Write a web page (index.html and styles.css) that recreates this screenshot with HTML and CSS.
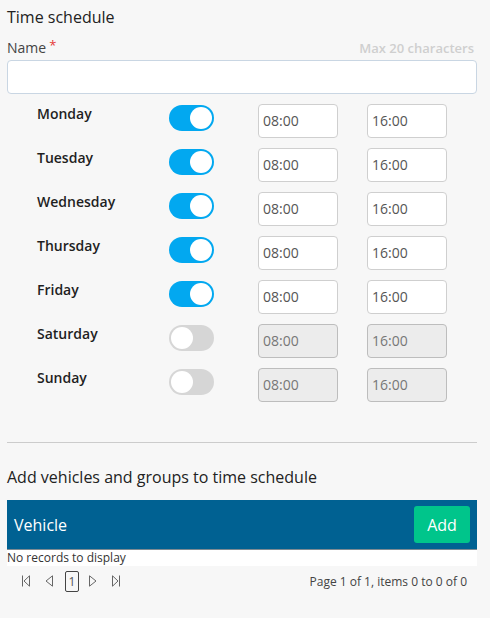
FILE: index.html
```html
<!DOCTYPE html>
<html>
<head>
<meta charset="utf-8">
<link rel="stylesheet" href="styles.css">
</head>
<body>
<div class="page">
  <h1 class="title">Time schedule</h1>
  <div class="name-row">
    <label class="name-label">Name<span class="req">*</span></label>
    <span class="hint">Max 20 characters</span>
  </div>
  <input class="name-input" type="text">

  <div class="days">
    <div class="day"><span class="day-name">Monday</span><span class="toggle on"><span class="knob"></span></span><span class="time">08:00</span><span class="time">16:00</span></div>
    <div class="day"><span class="day-name">Tuesday</span><span class="toggle on"><span class="knob"></span></span><span class="time">08:00</span><span class="time">16:00</span></div>
    <div class="day"><span class="day-name">Wednesday</span><span class="toggle on"><span class="knob"></span></span><span class="time">08:00</span><span class="time">16:00</span></div>
    <div class="day"><span class="day-name">Thursday</span><span class="toggle on"><span class="knob"></span></span><span class="time">08:00</span><span class="time">16:00</span></div>
    <div class="day"><span class="day-name">Friday</span><span class="toggle on"><span class="knob"></span></span><span class="time">08:00</span><span class="time">16:00</span></div>
    <div class="day"><span class="day-name">Saturday</span><span class="toggle"><span class="knob"></span></span><span class="time disabled">08:00</span><span class="time disabled">16:00</span></div>
    <div class="day"><span class="day-name">Sunday</span><span class="toggle"><span class="knob"></span></span><span class="time disabled">08:00</span><span class="time disabled">16:00</span></div>
  </div>

  <hr class="divider">

  <h2 class="subtitle">Add vehicles and groups to time schedule</h2>
  <div class="grid-header">
    <span class="col">Vehicle</span>
    <button class="add-btn">Add</button>
  </div>
  <div class="grid-empty">No records to display</div>
  <div class="pager">
    <div class="pager-nav">
      <svg class="pico first" viewBox="0 0 8 12" width="8" height="12"><path d="M0.5 0.5v11M7.5 0.8 2 6l5.5 5.2z" fill="none" stroke="#666" stroke-width="1"/></svg>
      <svg class="pico prev" viewBox="0 0 8 12" width="8" height="12"><path d="M7.5 0.8 1 6l6.5 5.2z" fill="none" stroke="#666" stroke-width="1"/></svg>
      <span class="page-num">1</span>
      <svg class="pico next" viewBox="0 0 8 12" width="8" height="12"><path d="M0.5 0.8 7 6l-6.5 5.2z" fill="none" stroke="#666" stroke-width="1"/></svg>
      <svg class="pico last" viewBox="0 0 8 12" width="8" height="12"><path d="M7.5 0.5v11M0.5 0.8 6 6l-5.5 5.2z" fill="none" stroke="#666" stroke-width="1"/></svg>
    </div>
    <span class="pager-info">Page 1 of 1, items 0 to 0 of 0</span>
  </div>
</div>
</body>
</html>
```

FILE: styles.css
```css
* { box-sizing: border-box; }
html, body {
  margin: 0;
  padding: 0;
  background: #f7f7f7;
  font-family: "Open Sans", "Noto Sans", sans-serif;
  color: #333;
}
.page {
  width: 490px;
  height: 618px;
  padding: 0 13px 0 7px;
}
.title {
  margin: 0;
  padding-top: 6px;
  font-size: 16px;
  font-weight: 400;
  line-height: 22px;
  color: #222;
}
.name-row {
  display: flex;
  justify-content: space-between;
  align-items: flex-end;
  margin-top: 10px;
  height: 20px;
}
.name-label {
  font-size: 14px;
  color: #444;
  line-height: 20px;
}
.req {
  color: #e53935;
  margin-left: 3px;
  vertical-align: 3px;
  font-size: 13px;
}
.hint {
  font-size: 13px;
  font-weight: 600;
  color: #cfcfcf;
  line-height: 20px;
  padding-right: 3px;
}
.name-input {
  display: block;
  width: 470px;
  height: 34px;
  margin-top: 2px;
  border: 1px solid #c9d6e3;
  border-radius: 4px;
  background: #fff;
}
.days {
  display: flex;
  flex-direction: column;
  gap: 11px;
  margin-top: 10px;
  padding-left: 30px;
}
.day {
  display: flex;
  align-items: flex-start;
  height: 33px;
}
.day-name {
  width: 132px;
  font-size: 14px;
  font-weight: 600;
  color: #1f1f1f;
  line-height: 20px;
}
.toggle {
  width: 45px;
  height: 26px;
  border-radius: 13px;
  background: #d6d6d6;
  margin-top: 1px;
  padding: 2px;
  display: flex;
  justify-content: flex-start;
}
.toggle.on {
  background: #02a8f0;
  justify-content: flex-end;
}
.knob {
  width: 22px;
  height: 22px;
  border-radius: 50%;
  background: #fff;
}
.time {
  width: 80px;
  height: 34px;
  border: 1px solid #cfcfcf;
  border-radius: 4px;
  background: #fff;
  font-size: 14px;
  color: #555;
  line-height: 32px;
  padding-left: 4px;
}
.toggle + .time { margin-left: 44px; }
.time + .time { margin-left: 29px; }
.time.disabled {
  background: #ececec;
  border-color: #bdbdbd;
  color: #777;
}
.divider {
  margin: 41px 0 0;
  border: 0;
  border-top: 1px solid #cccccc;
}
.subtitle {
  margin: 22px 0 0;
  font-size: 16px;
  font-weight: 400;
  line-height: 24px;
  color: #222;
}
.grid-header {
  display: flex;
  justify-content: space-between;
  align-items: center;
  margin-top: 11px;
  height: 50px;
  background: #006192;
  border-bottom: 1px solid #7d8a92;
  padding: 0 7px;
}
.col {
  color: #fff;
  font-size: 16px;
}
.add-btn {
  height: 37px;
  width: 56px;
  border: 0;
  border-radius: 3px;
  background: #00c58b;
  color: #fff;
  font-family: inherit;
  font-size: 16px;
  padding: 0;
}
.grid-empty {
  background: #fff;
  height: 16px;
  font-size: 12px;
  line-height: 16px;
  color: #333;
}
.pager {
  display: flex;
  justify-content: space-between;
  align-items: center;
  height: 30px;
  padding: 0 10px 0 15px;
}
.pager-nav {
  display: flex;
  align-items: center;
}
.pico.prev { margin-left: 15px; }
.pico.next { margin-left: 10px; }
.pico.last { margin-left: 15px; }
.pager-nav .page-num {
  display: inline-block;
  width: 14px;
  height: 21px;
  margin-left: 12px;
  border: 1px solid #444;
  border-radius: 2px;
  font-size: 12px;
  line-height: 19px;
  text-align: center;
  color: #555;
}
.pager-info {
  font-size: 12px;
  color: #444;
}
```
